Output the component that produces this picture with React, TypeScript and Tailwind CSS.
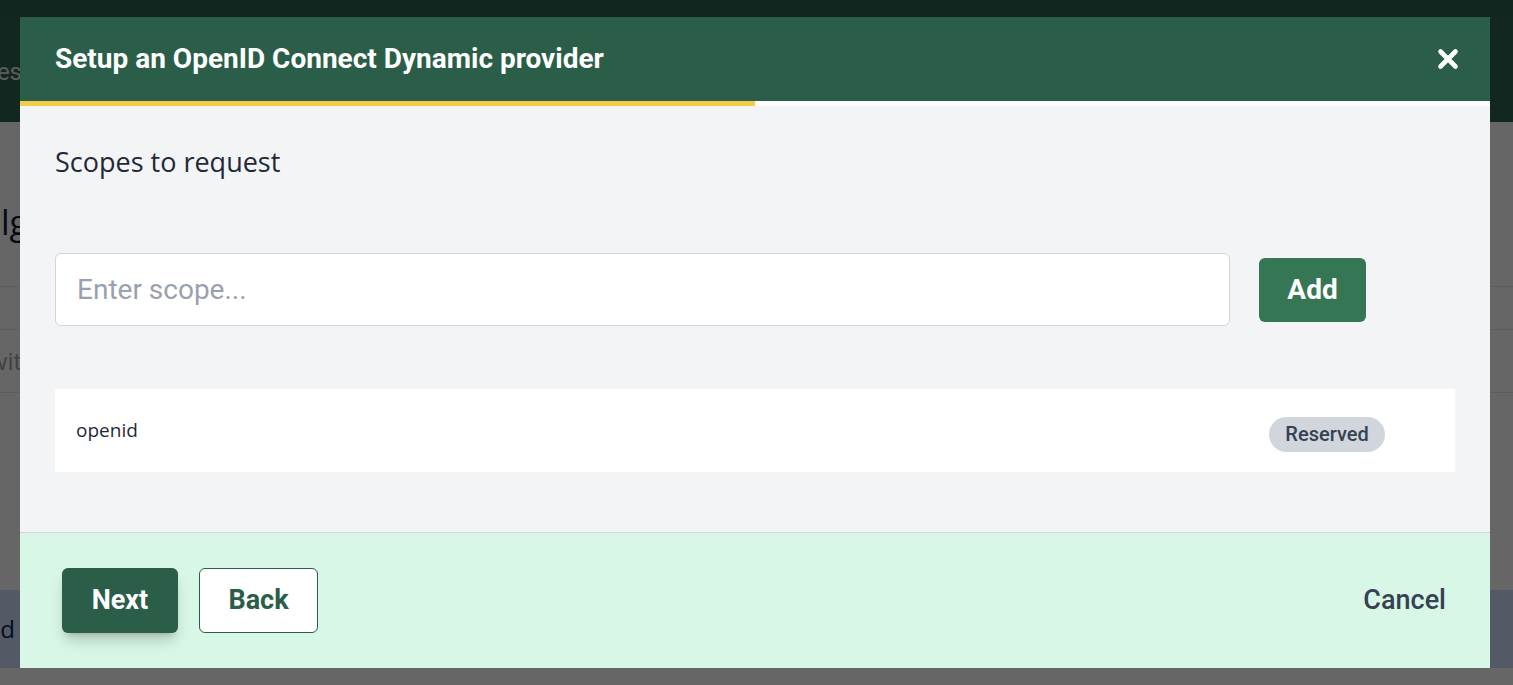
import { useState } from 'react';

function CloseIcon() {
    return (
        <svg width="22" height="22" viewBox="0 0 22 22" fill="none">
            <path d="M3.5 3.5 L18.5 18.5 M18.5 3.5 L3.5 18.5" stroke="white" strokeWidth="4.6" strokeLinecap="round" />
        </svg>
    );
}

export default function App() {
    const [scope, setScope] = useState('');

    return (
        <div className="relative w-[1513px] h-[685px] overflow-hidden bg-white font-['Roboto',sans-serif]">
            {/* page behind the dialog */}
            <div className="h-[17px] bg-[#2f5f4f]" />
            <div className="h-[105px] bg-[#2e6350] flex items-center pt-[4px]">
                <div className="w-[22px] overflow-hidden flex justify-end">
                    <span className="text-[24px] text-[#e6ece9] whitespace-nowrap">Identities</span>
                </div>
            </div>
            <div className="h-[165px] flex items-center pt-[36px] border-b border-gray-200">
                <div className="w-[30px] overflow-hidden pl-[1px]">
                    <span className="text-[34px] text-[#0b1730] font-['Open_Sans',sans-serif] whitespace-nowrap">lg</span>
                </div>
            </div>
            <div className="h-[43px] border-b border-gray-200" />
            <div className="h-[63px] flex items-center border-b border-gray-200">
                <div className="w-[22px] overflow-hidden flex justify-end">
                    <span className="text-[24px] text-[#9ca3af] font-['Open_Sans',sans-serif] whitespace-nowrap">Search wit</span>
                </div>
            </div>
            <div className="h-[197px]" />
            <div className="h-[78px] bg-[#cfe1ff] flex items-center">
                <div className="w-[15px] overflow-hidden flex justify-end">
                    <span className="text-[24px] text-[#0b1f4a] font-['Open_Sans',sans-serif] whitespace-nowrap">d</span>
                </div>
            </div>

            {/* overlay + dialog */}
            <div className="absolute inset-0 bg-black/60">
                <div className="absolute left-[20px] top-[17px] w-[1470px] h-[651px] flex flex-col">
                    <div className="h-[84px] bg-[#2a5e48] flex items-center justify-between pl-[35px] pr-[31px]">
                        <h3 className="text-[28px] font-bold text-white">Setup an OpenID Connect Dynamic provider</h3>
                        <button className="flex items-center justify-center">
                            <CloseIcon />
                        </button>
                    </div>
                    <div className="h-[5px] bg-white">
                        <div className="h-full w-[735px] bg-[#f2cd48]" />
                    </div>

                    <div className="flex-1 bg-[#f3f4f6] px-[35px] pt-[40px]">
                        <p className="text-[27px] leading-[32px] text-[#1f2937] font-['Open_Sans',sans-serif]">Scopes to request</p>

                        <div className="mt-[75px] flex items-center">
                            <input
                                value={scope}
                                onChange={(e) => setScope(e.target.value)}
                                placeholder="Enter scope..."
                                className="w-[1175px] h-[73px] px-[21px] bg-white border border-gray-300 rounded-[6px] text-[28px] text-gray-800 placeholder:text-gray-400 outline-none"
                            />
                            <button className="ml-[29px] w-[107px] h-[64px] bg-[#357755] text-white text-[28px] font-bold rounded-[6px]">
                                Add
                            </button>
                        </div>

                        <div className="mt-[63px] h-[83px] bg-white flex items-center justify-between pl-[21px] pr-[70px]">
                            <span className="text-[19px] text-[#1f2937] font-['Open_Sans',sans-serif]">openid</span>
                            <span className="mt-[7px] w-[116px] h-[35px] flex items-center justify-center rounded-full bg-gray-300 text-[20px] font-medium text-gray-700">
                                Reserved
                            </span>
                        </div>
                    </div>

                    <div className="h-[136px] bg-[#d9f7e6] border-t border-gray-300 flex items-center justify-between pl-[42px] pr-[44px]">
                        <div className="flex items-center gap-[21px]">
                            <button className="w-[116px] h-[65px] bg-[#2a5e48] text-white text-[27px] font-bold rounded-[6px] shadow-lg shadow-black/20">
                                Next
                            </button>
                            <button className="w-[119px] h-[65px] bg-white border border-[#2a5e48] text-[#2a5e48] text-[27px] font-bold rounded-[6px]">
                                Back
                            </button>
                        </div>
                        <button className="text-[27px] font-medium text-gray-700">Cancel</button>
                    </div>
                </div>
            </div>
        </div>
    );
}
